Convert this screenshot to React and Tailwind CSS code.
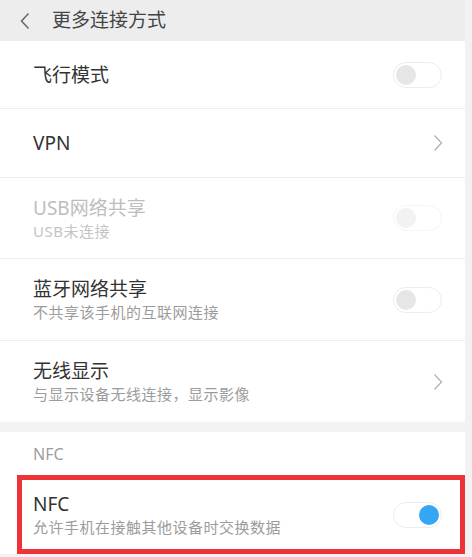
import React from 'react';

const font = { fontFamily: '"Noto Sans", "Noto Sans CJK SC", sans-serif' };

function Toggle({ on, disabled }) {
    return (
        <div className={`w-[49px] h-[26px] rounded-full border border-[#ececec] bg-white flex items-center px-[2px] ${on ? 'justify-end' : 'justify-start'} ${disabled ? 'opacity-50' : ''}`}>
            <div className={`w-[20px] h-[20px] rounded-full ${on ? 'bg-[#34a6f3]' : 'bg-[#e6e6e6]'}`} />
        </div>
    );
}

function Chevron() {
    return (
        <svg width="10" height="18" viewBox="0 0 10 18" fill="none" stroke="#b5b5b5" strokeWidth="1.4">
            <path d="M1.5 1.5 L8.5 9 L1.5 16.5" />
        </svg>
    );
}

function Row({ title, sub, right, disabled, last, height }) {
    return (
        <div className={`flex items-center pl-[33px] ${last ? '' : 'border-b border-[#eeeeee]'} ${height}`}>
            <div className="flex-1">
                <div className={`text-[19px] leading-[26px] ${disabled ? 'text-[#bdbdbd]' : 'text-[#333333]'}`}>{title}</div>
                {sub && <div className={`text-[15px] tracking-[0.5px] leading-[21px] ${disabled ? 'text-[#c4c4c4]' : 'text-[#9c9c9c]'}`}>{sub}</div>}
            </div>
            <div className="w-[72px] flex justify-start">{right}</div>
        </div>
    );
}

export default function App() {
    return (
        <div className="w-[472px] h-[557px] bg-[#f2f2f2] overflow-hidden" style={font}>
            <div className="w-[465px]">
                {/* Header */}
                <div className="h-[41px] bg-[#ededed] flex items-center">
                    <svg className="ml-[20px]" width="10" height="18" viewBox="0 0 10 18" fill="none" stroke="#666666" strokeWidth="1.5">
                        <path d="M8.5 1.5 L1.5 9 L8.5 16.5" />
                    </svg>
                    <span className="ml-[22px] text-[19px] text-[#444444]">更多连接方式</span>
                </div>

                <div className="bg-white">
                    <Row title="飞行模式" height="h-[68px]" right={<Toggle />} />
                    <Row title="VPN" height="h-[69px]" right={<div className="pl-[40px]"><Chevron /></div>} />
                    <Row title="USB网络共享" sub="USB未连接" height="h-[81px]" disabled right={<Toggle disabled />} />
                    <Row title="蓝牙网络共享" sub="不共享该手机的互联网连接" height="h-[82px]" right={<Toggle />} />
                    <Row title="无线显示" sub="与显示设备无线连接，显示影像" height="h-[81px]" last right={<div className="pl-[40px]"><Chevron /></div>} />
                </div>

                <div className="h-[10px] bg-[#f3f3f3]" />

                <div className="bg-white">
                    <div className="h-[43px] flex items-center pl-[33px] text-[16px] text-[#9e9e9e]">NFC</div>
                    <div className="ml-[17px] h-[79px] border-[5px] border-[#ee3338] flex items-center pl-[11px]">
                        <div className="flex-1">
                            <div className="text-[19px] leading-[26px] text-[#333333]">NFC</div>
                            <div className="text-[15px] tracking-[0.5px] leading-[21px] text-[#9c9c9c]">允许手机在接触其他设备时交换数据</div>
                        </div>
                        <div className="w-[67px]"><Toggle on /></div>
                    </div>
                </div>
            </div>
        </div>
    );
}
